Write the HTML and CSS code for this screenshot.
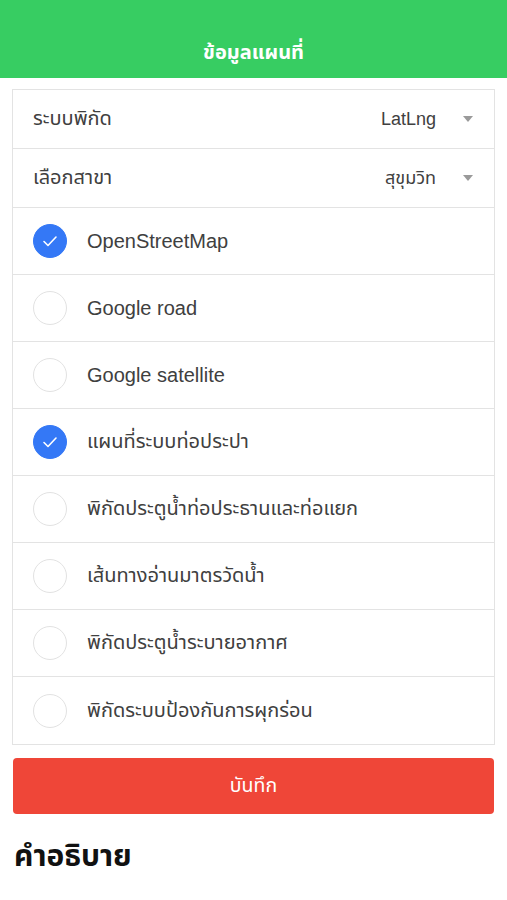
FILE: index.html
```html
<!DOCTYPE html>
<html lang="th">
<head>
<meta charset="utf-8">
<link rel="stylesheet" href="styles.css">
</head>
<body>
<header class="topbar"><h1 class="title">ข้อมูลแผนที่</h1></header>
<main class="content">
  <section class="card">
    <div class="row select-row">
      <span class="label">ระบบพิกัด</span>
      <span class="value">LatLng<span class="caret"></span></span>
    </div>
    <div class="row select-row">
      <span class="label">เลือกสาขา</span>
      <span class="value">สุขุมวิท<span class="caret"></span></span>
    </div>
    <div class="row check-row"><span class="check on"><svg viewBox="0 0 34 34" width="34" height="34"><path d="M11 17.5l4 4 8-8.5" fill="none" stroke="#fff" stroke-width="1.6" stroke-linecap="round" stroke-linejoin="round"/></svg></span><span class="label">OpenStreetMap</span></div>
    <div class="row check-row"><span class="check"></span><span class="label">Google road</span></div>
    <div class="row check-row"><span class="check"></span><span class="label">Google satellite</span></div>
    <div class="row check-row"><span class="check on"><svg viewBox="0 0 34 34" width="34" height="34"><path d="M11 17.5l4 4 8-8.5" fill="none" stroke="#fff" stroke-width="1.6" stroke-linecap="round" stroke-linejoin="round"/></svg></span><span class="label">แผนที่ระบบท่อประปา</span></div>
    <div class="row check-row"><span class="check"></span><span class="label">พิกัดประตูน้ำท่อประธานและท่อแยก</span></div>
    <div class="row check-row"><span class="check"></span><span class="label">เส้นทางอ่านมาตรวัดน้ำ</span></div>
    <div class="row check-row"><span class="check"></span><span class="label">พิกัดประตูน้ำระบายอากาศ</span></div>
    <div class="row check-row last"><span class="check"></span><span class="label">พิกัดระบบป้องกันการผุกร่อน</span></div>
  </section>
  <button class="save">บันทึก</button>
  <h2 class="desc">คำอธิบาย</h2>
</main>
</body>
</html>
```
FILE: styles.css
```css
* { box-sizing: border-box; }
html, body { margin: 0; padding: 0; background: #fff; }
body {
  font-family: "Liberation Sans", "Noto Sans Thai", "Noto Sans", sans-serif;
  color: #333;
  width: 507px;
}
.topbar {
  height: 78px;
  background: #37cd62;
  display: flex;
  align-items: flex-end;
  justify-content: center;
  padding-bottom: 12px;
}
.title {
  margin: 0;
  color: #fff;
  font-size: 20px;
  font-weight: bold;
  line-height: 28px;
}
.content { padding: 11px 12px 0; }
.card {
  border: 1px solid #e3e3e3;
  background: #fff;
}
.row {
  display: flex;
  align-items: center;
  border-bottom: 1px solid #e3e3e3;
  font-size: 20px;
  color: #404040;
}
.row.last { border-bottom: none; }
.select-row {
  height: 59px;
  justify-content: space-between;
  padding: 0 21px 0 20px;
}
.value {
  display: flex;
  align-items: center;
  font-size: 18px;
}
.caret {
  width: 0; height: 0;
  border-left: 5px solid transparent;
  border-right: 5px solid transparent;
  border-top: 6px solid #9a9a9a;
  margin-left: 27px;
}
.check-row {
  height: 67px;
  padding-left: 20px;
}
.check {
  width: 34px; height: 34px;
  border-radius: 50%;
  border: 1px solid #e2e2e2;
  margin-right: 20px;
  flex: none;
  display: flex;
}
.check.on { background: #3478f6; border-color: #3478f6; }
.check svg { display: block; margin: -1px; }
.save {
  display: block;
  width: 481px;
  margin: 13px 0 0 1px;
  height: 56px;
  border: none;
  border-radius: 4px;
  background: #ef4638;
  color: #fff;
  font-family: inherit;
  font-size: 19.5px;
}
.desc {
  margin: 22px 0 0 2px;
  font-size: 30px;
  font-weight: bold;
  color: #111;
  line-height: 40px;
}
```
